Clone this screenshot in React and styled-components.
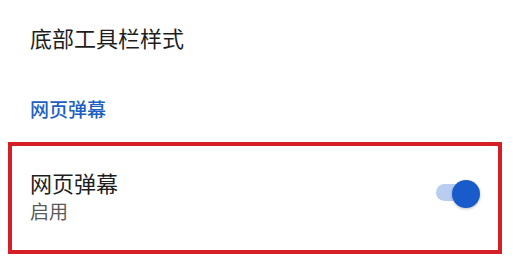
import React from 'react';
import styled, { createGlobalStyle } from 'styled-components';

const GlobalStyle = createGlobalStyle`
  html, body {
    margin: 0;
    padding: 0;
    background: #ffffff;
  }
  body {
    font-family: "Noto Sans CJK SC", "Noto Sans", sans-serif;
  }
`;

const Page = styled.div`
  width: 521px;
  height: 278px;
  overflow: hidden;
  background: #fff;
  display: flex;
  flex-direction: column;
  padding: 26px 19px 0 8px;
  box-sizing: border-box;
`;

const ItemTitle = styled.div`
  font-size: 22px;
  line-height: 22px;
  color: #1e1e1e;
  padding-left: 22px;
`;

const SectionHeader = styled.div`
  margin-top: 51px;
  padding-left: 22px;
  font-size: 19px;
  line-height: 19px;
  font-weight: 500;
  color: #1d5fc2;
`;

const Highlight = styled.div`
  margin-top: 24px;
  border: 4px solid #d41f26;
  padding: 25px 18px 30px 18px;
  display: flex;
  align-items: center;
  justify-content: space-between;
`;

const TextCol = styled.div`
  display: flex;
  flex-direction: column;
  gap: 8px;
`;

const RowTitle = styled.div`
  font-size: 22px;
  line-height: 22px;
  color: #1e1e1e;
`;

const RowSub = styled.div`
  font-size: 19px;
  line-height: 19px;
  color: #5a5a5a;
`;

const Switch = styled.div`
  position: relative;
  width: 44px;
  height: 28px;
  margin-bottom: 3px;
  display: flex;
  align-items: center;
`;

const Track = styled.div`
  width: 38px;
  height: 17px;
  border-radius: 9px;
  background: ${p => (p.$on ? '#b8cdf0' : '#d0d0d0')};
  margin-top: -3px;
`;

const Knob = styled.div`
  position: absolute;
  top: 0;
  ${p => (p.$on ? 'right: 0;' : 'left: 0;')}
  width: 28px;
  height: 28px;
  border-radius: 50%;
  background: ${p => (p.$on ? '#1a5bcb' : '#f4f4f4')};
  box-shadow: 0 1px 3px rgba(0, 0, 0, 0.25);
`;

const Toggle = ({ on }) => (
  <Switch>
    <Track $on={on} />
    <Knob $on={on} />
  </Switch>
);

export default function App() {
  return (
    <>
      <GlobalStyle />
      <Page>
        <ItemTitle>底部工具栏样式</ItemTitle>
        <SectionHeader>网页弹幕</SectionHeader>
        <Highlight>
          <TextCol>
            <RowTitle>网页弹幕</RowTitle>
            <RowSub>启用</RowSub>
          </TextCol>
          <Toggle on />
        </Highlight>
      </Page>
    </>
  );
}
